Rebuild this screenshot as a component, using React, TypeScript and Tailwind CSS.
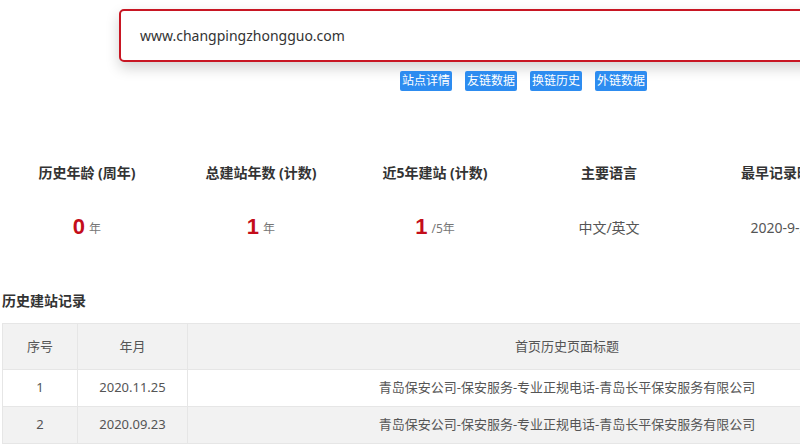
import React from "react";

const stats = [
  { label: "历史年龄 (周年)", value: "0", unit: "年" },
  { label: "总建站年数 (计数)", value: "1", unit: "年" },
  { label: "近5年建站 (计数)", value: "1", unit: "/5年" },
  { label: "主要语言", text: "中文/英文" },
  { label: "最早记录时间", text: "2020-9-23" },
];

const links = ["站点详情", "友链数据", "换链历史", "外链数据"];

const rows = [
  { no: 1, date: "2020.11.25", title: "青岛保安公司-保安服务-专业正规电话-青岛长平保安服务有限公司" },
  { no: 2, date: "2020.09.23", title: "青岛保安公司-保安服务-专业正规电话-青岛长平保安服务有限公司" },
];

export default function App() {
  return (
    <div
      className="w-[800px] h-[447px] overflow-hidden bg-white text-[#333]"
      style={{ fontFamily: '"Noto Sans", "Noto Sans CJK SC", sans-serif' }}
    >
      <div className="w-[1000px]">
        <div className="pt-[9px] pl-[119px]">
          <div className="h-[53px] w-[810px] rounded-[5px] border-2 border-[#c81623] bg-white shadow-[0_6px_14px_rgba(0,0,0,0.18)] flex items-center pl-[19px] text-[14px] text-[#333]">
            www.changpingzhongguo.com
          </div>
        </div>

        <div className="flex gap-[13px] pl-[400px] mt-[9px]">
          {links.map((l) => (
            <span
              key={l}
              className="h-[20px] w-[52px] flex items-center justify-center bg-[#2d8cf0] text-white text-[12px] rounded-[2px] leading-none"
            >
              {l}
            </span>
          ))}
        </div>

        <div className="flex mt-[71px]">
          {stats.map((s) => (
            <div key={s.label} className="w-[174px] flex flex-col items-center">
              <div className="text-[14px] font-bold text-[#333] leading-[22px]">{s.label}</div>
              <div className="mt-[28px] h-[28px] flex items-end">
                {s.value ? (
                  <>
                    <span
                      className="text-[22px] font-bold text-[#c40d1a] leading-[26px]"
                      style={{ fontFamily: '"Liberation Sans", sans-serif' }}
                    >
                      {s.value}
                    </span>
                    <span className="text-[12px] text-[#777] ml-[4px] leading-[22px]">{s.unit}</span>
                  </>
                ) : (
                  <span className="text-[14px] text-[#555] leading-[24px]">{s.text}</span>
                )}
              </div>
            </div>
          ))}
        </div>

        <div className="mt-[51px] pl-[2px] text-[14px] font-bold text-[#333] leading-[20px]">历史建站记录</div>

        <table className="ml-[2px] mt-[12px] w-[945px] border-collapse text-[13px] text-[#555]">
          <thead>
            <tr className="bg-[#f2f2f2]">
              <th className="w-[75px] h-[46px] border border-[#e6e6e6] font-normal">序号</th>
              <th className="w-[110px] border border-[#e6e6e6] font-normal">年月</th>
              <th className="border border-[#e6e6e6] font-normal">首页历史页面标题</th>
            </tr>
          </thead>
          <tbody>
            {rows.map((r, i) => (
              <tr key={r.no} className={i % 2 === 1 ? "bg-[#f2f2f2]" : "bg-white"}>
                <td className="h-[37px] border border-[#e6e6e6] text-center">{r.no}</td>
                <td className="border border-[#e6e6e6] text-center">{r.date}</td>
                <td className="border border-[#e6e6e6] text-center">{r.title}</td>
              </tr>
            ))}
          </tbody>
        </table>
      </div>
    </div>
  );
}
